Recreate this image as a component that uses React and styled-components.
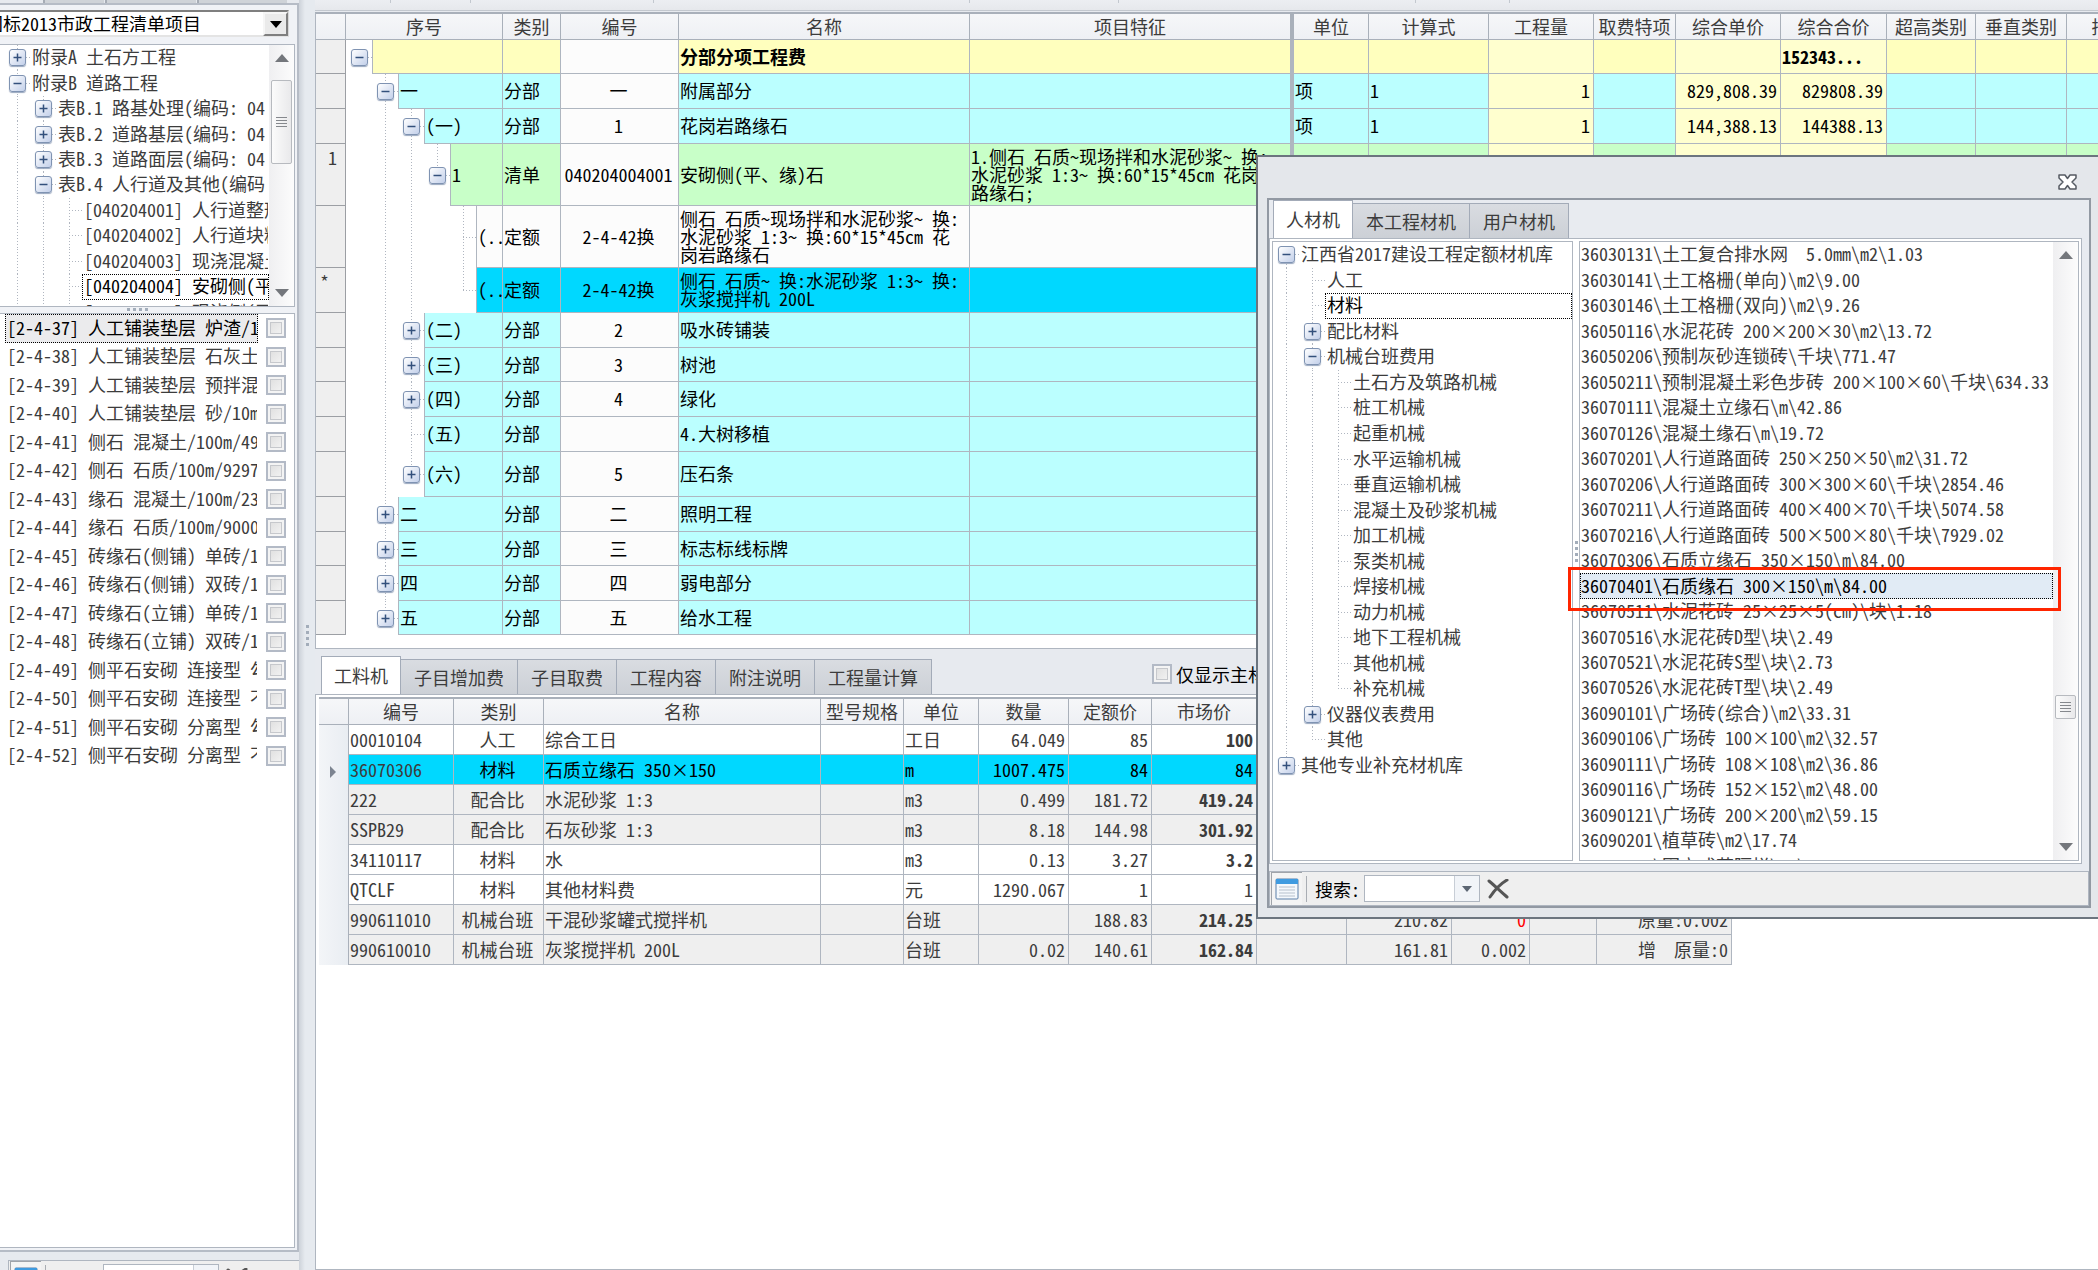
import { useState, Fragment } from 'react'
import styled, { createGlobalStyle, css } from 'styled-components'

const GlobalStyle = createGlobalStyle`
    * {
        box-sizing: border-box;
    }

    body {
        margin: 0;
        overflow: hidden;
        background: #e7eaef;
        color: #3c3c3c;
        font-family: 'Noto Sans Mono CJK SC', 'Liberation Mono', 'Noto Sans CJK SC', monospace;
        font-size: 18px;
        line-height: 18px;
    }

    button, input, select {
        font: inherit;
        color: inherit;
        margin: 0;
    }
`

const line = '#afb6c0'
const yellow = '#ffffbe'
const pale = '#ffffcf'
const cyan = '#bbffff'
const green = '#c8ffc8'
const active = '#00d8ff'

/* ---------- data ---------- */

// guides: one char per tree column, the last one belongs to the node itself
// '|' full line, 'L' upper half, 'T' lower half, ' ' nothing
const listTree = [
    { guides: '|', toggle: '+', label: '附录A 土石方工程' },
    { guides: '|', toggle: '-', label: '附录B 道路工程' },
    { guides: '||', toggle: '+', label: '表B.1 路基处理(编码: 04' },
    { guides: '||', toggle: '+', label: '表B.2 道路基层(编码: 04' },
    { guides: '||', toggle: '+', label: '表B.3 道路面层(编码: 04' },
    { guides: '||', toggle: '-', label: '表B.4 人行道及其他(编码' },
    { guides: '|||', label: '[040204001] 人行道整形' },
    { guides: '|||', label: '[040204002] 人行道块料' },
    { guides: '|||', label: '[040204003] 现浇混凝土' },
    { guides: '|||', label: '[040204004] 安砌侧(平', selected: true },
    { guides: '|||', label: '[040204005] 现浇侧(平' },
]

const quotas = [
    '[2-4-37] 人工铺装垫层 炉渣/10',
    '[2-4-38] 人工铺装垫层 石灰土',
    '[2-4-39] 人工铺装垫层 预拌混',
    '[2-4-40] 人工铺装垫层 砂/10m',
    '[2-4-41] 侧石 混凝土/100m/49',
    '[2-4-42] 侧石 石质/100m/9297',
    '[2-4-43] 缘石 混凝土/100m/23',
    '[2-4-44] 缘石 石质/100m/9000',
    '[2-4-45] 砖缘石(侧铺) 单砖/1',
    '[2-4-46] 砖缘石(侧铺) 双砖/1',
    '[2-4-47] 砖缘石(立铺) 单砖/1',
    '[2-4-48] 砖缘石(立铺) 双砖/1',
    '[2-4-49] 侧平石安砌 连接型 勾',
    '[2-4-50] 侧平石安砌 连接型 不',
    '[2-4-51] 侧平石安砌 分离型 勾',
    '[2-4-52] 侧平石安砌 分离型 不',
]

const billColumns = [
    ['序号', 157], ['类别', 58], ['编号', 118], ['名称', 291], ['项目特征', 324], ['单位', 75],
    ['计算式', 120], ['工程量', 105], ['取费特项', 82], ['综合单价', 105], ['综合合价', 106],
    ['超高类别', 89], ['垂直类别', 91], ['措施类别', 122],
]

const bill = [
    { h: 34, tone: yellow, guides: ' ', toggle: '-', name: '分部分项工程费', total: '152343...', bold: true },
    { h: 35, tone: cyan, guides: ' |', toggle: '-', no: '一', kind: '分部', code: '一', name: '附属部分', unit: '项', expr: '1', qty: '1', price: '829,808.39', total: '829808.39' },
    { h: 35, tone: cyan, guides: ' ||', toggle: '-', no: '(一)', kind: '分部', code: '1', name: '花岗岩路缘石', unit: '项', expr: '1', qty: '1', price: '144,388.13', total: '144388.13' },
    { h: 62, mark: '1', tone: green, guides: ' ||L', toggle: '-', no: '1', kind: '清单', code: '040204004001', name: '安砌侧(平、缘)石', feature: '1.侧石 石质~现场拌和水泥砂浆~ 换:\n水泥砂浆 1:3~ 换:60*15*45cm 花岗岩\n路缘石;' },
    { h: 62, tone: '#fcfcfc', guides: ' || |', no: '(..', kind: '定额', code: '2-4-42换', name: '侧石 石质~现场拌和水泥砂浆~ 换:\n水泥砂浆 1:3~ 换:60*15*45cm 花\n岗岩路缘石' },
    { h: 45, mark: '*', tone: active, selected: true, guides: ' || L', no: '(..', kind: '定额', code: '2-4-42换', name: '侧石 石质~ 换:水泥砂浆 1:3~ 换:\n灰浆搅拌机 200L' },
    { h: 35, tone: cyan, guides: ' ||', toggle: '+', no: '(二)', kind: '分部', code: '2', name: '吸水砖铺装' },
    { h: 34, tone: cyan, guides: ' ||', toggle: '+', no: '(三)', kind: '分部', code: '3', name: '树池' },
    { h: 35, tone: cyan, guides: ' ||', toggle: '+', no: '(四)', kind: '分部', code: '4', name: '绿化' },
    { h: 35, tone: cyan, guides: ' ||', no: '(五)', kind: '分部', code: '', name: '4.大树移植' },
    { h: 45, tone: cyan, guides: ' |L', toggle: '+', no: '(六)', kind: '分部', code: '5', name: '压石条' },
    { h: 35, tone: cyan, guides: ' |', toggle: '+', no: '二', kind: '分部', code: '二', name: '照明工程' },
    { h: 34, tone: cyan, guides: ' |', toggle: '+', no: '三', kind: '分部', code: '三', name: '标志标线标牌' },
    { h: 35, tone: cyan, guides: ' |', toggle: '+', no: '四', kind: '分部', code: '四', name: '弱电部分' },
    { h: 34, tone: cyan, guides: ' L', toggle: '+', no: '五', kind: '分部', code: '五', name: '给水工程' },
]

const resourceTabs = ['工料机', '子目增加费', '子目取费', '工程内容', '附注说明', '工程量计算']

const resourceColumns = [
    ['编号', 105], ['类别', 90], ['名称', 277], ['型号规格', 83], ['单位', 75], ['数量', 90],
    ['定额价', 83], ['市场价', 105], ['', 90], ['', 105], ['', 78], ['', 67], ['', 135],
]

const resources = [
    { cells: ['00010104', '人工', '综合工日', '', '工日', '64.049', '85', '100'] },
    { cells: ['36070306', '材料', '石质立缘石 350×150', '', 'm', '1007.475', '84', '84'], selected: true },
    { cells: ['222', '配合比', '水泥砂浆 1:3', '', 'm3', '0.499', '181.72', '419.24'], shade: true },
    { cells: ['SSPB29', '配合比', '石灰砂浆 1:3', '', 'm3', '8.18', '144.98', '301.92'], shade: true },
    { cells: ['34110117', '材料', '水', '', 'm3', '0.13', '3.27', '3.2'] },
    { cells: ['QTCLF', '材料', '其他材料费', '', '元', '1290.067', '1', '1'] },
    { cells: ['990611010', '机械台班', '干混砂浆罐式搅拌机', '', '台班', '', '188.83', '214.25', '', '210.82', '0', '', '原量:0.002'], shade: true, alert: true },
    { cells: ['990610010', '机械台班', '灰浆搅拌机 200L', '', '台班', '0.02', '140.61', '162.84', '', '161.81', '0.002', '', '增  原量:0'], shade: true },
]

const libraryTabs = ['人材机', '本工程材机', '用户材机']

const libraryTree = [
    { guides: 'T', toggle: '-', label: '江西省2017建设工程定额材机库' },
    { guides: '||', label: '人工' },
    { guides: '||', label: '材料', selected: true },
    { guides: '||', toggle: '+', label: '配比材料' },
    { guides: '||', toggle: '-', label: '机械台班费用' },
    ...['土石方及筑路机械', '桩工机械', '起重机械', '水平运输机械', '垂直运输机械', '混凝土及砂浆机械',
        '加工机械', '泵类机械', '焊接机械', '动力机械', '地下工程机械', '其他机械'].map(label => ({ guides: '|||', label })),
    { guides: '||L', label: '补充机械' },
    { guides: '||', toggle: '+', label: '仪器仪表费用' },
    { guides: '|L', label: '其他' },
    { guides: 'L', toggle: '+', label: '其他专业补充材机库' },
]

const materials = [
    '36030131\\土工复合排水网  5.0mm\\m2\\1.03',
    '36030141\\土工格栅(单向)\\m2\\9.00',
    '36030146\\土工格栅(双向)\\m2\\9.26',
    '36050116\\水泥花砖 200×200×30\\m2\\13.72',
    '36050206\\预制灰砂连锁砖\\千块\\771.47',
    '36050211\\预制混凝土彩色步砖 200×100×60\\千块\\634.33',
    '36070111\\混凝土立缘石\\m\\42.86',
    '36070126\\混凝土缘石\\m\\19.72',
    '36070201\\人行道路面砖 250×250×50\\m2\\31.72',
    '36070206\\人行道路面砖 300×300×60\\千块\\2854.46',
    '36070211\\人行道路面砖 400×400×70\\千块\\5074.58',
    '36070216\\人行道路面砖 500×500×80\\千块\\7929.02',
    '36070306\\石质立缘石 350×150\\m\\84.00',
    '36070401\\石质缘石 300×150\\m\\84.00',
    '36070511\\水泥花砖 25×25×5(cm)\\块\\1.18',
    '36070516\\水泥花砖D型\\块\\2.49',
    '36070521\\水泥花砖S型\\块\\2.73',
    '36070526\\水泥花砖T型\\块\\2.49',
    '36090101\\广场砖(综合)\\m2\\33.31',
    '36090106\\广场砖 100×100\\m2\\32.57',
    '36090111\\广场砖 108×108\\m2\\36.86',
    '36090116\\广场砖 152×152\\m2\\48.00',
    '36090121\\广场砖 200×200\\m2\\59.15',
    '36090201\\植草砖\\m2\\17.74',
    '36090301\\围立式花隔栏\\m2\\20.00',
]

/* ---------- shared parts ---------- */

const ToggleButton = ({ sign }) => (
    <Toggle type='button' aria-label={sign === '+' ? '展开' : '收起'}>
        <svg width='9' height='9' viewBox='0 0 9 9' stroke='#33507c' strokeWidth='1.5'>
            <path d={sign === '+' ? 'M0.500 4.500h8M4.500 0.500v8' : 'M0.500 4.500h8'} />
        </svg>
    </Toggle>
)

const Guides = ({ guides, toggle }) => (
    <>
        {guides.split('').map((kind, i) => {
            const isNode = i === guides.length - 1
            return (
                <Guide key={i} $kind={kind} $tick={isNode}>
                    {isNode && toggle && <ToggleButton sign={toggle} />}
                </Guide>
            )
        })}
    </>
)

const Tree = ({ items, height }) => (
    <TreeList style={{ height }}>
        {items.map(({ guides, toggle, label, selected }) => (
            <TreeRow key={label + guides}>
                <Guides guides={guides} toggle={toggle} />
                <TreeLabel $selected={selected}>{label}</TreeLabel>
            </TreeRow>
        ))}
    </TreeList>
)

const Scroll = ({ before, size, after }) => (
    <ScrollBar>
        <Arrow />
        <Space $grow={before} />
        <Thumb $size={size}><i /><i /><i /><i /></Thumb>
        <Space $grow={after} />
        <Arrow $down />
    </ScrollBar>
)

const SearchTools = ({ id }) => (
    <Tools>
        <ToolButton type='button' aria-label='列表'>
            <svg width='24' height='22' viewBox='0 0 24 22'>
                <rect x='1' y='1' width='22' height='20' rx='1' fill='#f4f8fc' stroke='#5b7fa8' />
                <rect x='1' y='1' width='22' height='5' fill='#3f9be0' />
                <path d='M4 9h16M4 12h16M4 15h16M4 18h16' stroke='#b6c0cc' />
            </svg>
        </ToolButton>
        <ToolLine />
        <label htmlFor={id}>搜索:</label>
        <SearchBox>
            <input id={id} type='text' />
            <button type='button' aria-label='历史'>
                <svg width='10' height='6' viewBox='0 0 10 6'><path d='M0 0h10L5 6z' fill='#5c6673' /></svg>
            </button>
        </SearchBox>
        <ClearButton type='button' aria-label='清除'>
            <svg width='22' height='20' viewBox='0 0 22 20' fill='none' stroke='#555' strokeLinecap='round'>
                <path d='M2 2C7 6 14 13 20 18' strokeWidth='3' />
                <path d='M20 1C13 5 7 12 3 18' strokeWidth='3' />
            </svg>
        </ClearButton>
    </Tools>
)

/* ---------- panels ---------- */

const CatalogPanel = () => {

    const [picked, setPicked] = useState(0)

    return (
        <Catalog>
            <TopStub><i /><i /><i /></TopStub>
            <CatalogFrame>
                <Combo>
                    <select aria-label='清单库'>
                        <option>国标2013市政工程清单项目</option>
                    </select>
                    <ComboArrow>
                        <svg width='12' height='7' viewBox='0 0 12 7'><path d='M0 0h12L6 7z' fill='#000' /></svg>
                    </ComboArrow>
                </Combo>
                <TreeBox>
                    <Tree items={listTree} height={280} />
                    <Scroll before={18} size={84} after={127} />
                </TreeBox>
                <Grip><i /><i /><i /><i /></Grip>
                <QuotaBox>
                    <QuotaList>
                        {quotas.map((text, i) => (
                            <QuotaRow key={text} $selected={picked === i} onClick={() => setPicked(i)}>
                                <label htmlFor={`quota-${i}`}>{text}</label>
                                <Check id={`quota-${i}`} type='checkbox' />
                            </QuotaRow>
                        ))}
                    </QuotaList>
                </QuotaBox>
            </CatalogFrame>
            <CatalogTools><SearchTools id='catalog-search' /></CatalogTools>
        </Catalog>
    )
}

const BillGrid = () => (
    <BillFrame>
        <Table>
            <colgroup>
                <col style={{ width: 30 }} />
                {billColumns.map(([title, width]) => <col key={title} style={{ width }} />)}
            </colgroup>
            <thead>
                <tr>
                    <HeadCell />
                    {billColumns.map(([title]) => <HeadCell key={title} $freeze={title === '项目特征'}>{title}</HeadCell>)}
                </tr>
            </thead>
            <tbody>
                {bill.map((row, i) => {
                    const money = row.selected ? active : pale
                    return (
                        <BillRow key={i} $h={row.h}>
                            <MarkCell $right={row.mark === '1'}>{row.mark}</MarkCell>
                            <NodeCell>
                                <NodeBox>
                                    <Guides guides={row.guides} toggle={row.toggle} />
                                    <NodeText $tone={row.tone}>{row.no}</NodeText>
                                </NodeBox>
                            </NodeCell>
                            <Cell $tone={row.tone}>{row.kind}</Cell>
                            <Cell $tone={row.selected ? active : '#fcfcfc'} $align='center'>{row.code}</Cell>
                            <Cell $tone={row.tone} $bold={row.bold}>{row.name}</Cell>
                            <Cell $tone={row.tone} $freeze>{row.feature}</Cell>
                            <Cell $tone={row.tone}>{row.unit}</Cell>
                            <Cell $tone={row.tone}>{row.expr}</Cell>
                            <Cell $tone={money} $align='right'>{row.qty}</Cell>
                            <Cell $tone={row.tone} />
                            <Cell $tone={money} $align='right'>{row.price}</Cell>
                            <Cell $tone={money} $align={row.bold ? 'left' : 'right'} $bold={row.bold}>{row.total}</Cell>
                            <Cell $tone={row.tone} />
                            <Cell $tone={row.tone} />
                            <Cell $tone={row.tone} />
                        </BillRow>
                    )
                })}
            </tbody>
        </Table>
    </BillFrame>
)

const ResourcePanel = () => {

    const [tab, setTab] = useState(resourceTabs[0])

    return (
        <Resource>
            <ResourceHead>
                <Tabs>
                    {resourceTabs.map(name => (
                        <Tab key={name} type='button' $on={tab === name} onClick={() => setTab(name)}>{name}</Tab>
                    ))}
                </Tabs>
                <OnlyMain>
                    <Check type='checkbox' />
                    仅显示主材
                </OnlyMain>
            </ResourceHead>
            <ResourceBody>
                <Table $top>
                    <colgroup>
                        <col style={{ width: 30 }} />
                        {resourceColumns.map(([, width], i) => <col key={i} style={{ width }} />)}
                    </colgroup>
                    <thead>
                        <tr>
                            <HeadCell />
                            {resourceColumns.map(([title], i) => <HeadCell key={i}>{title}</HeadCell>)}
                        </tr>
                    </thead>
                    <tbody>
                        {resources.map(({ cells, selected, shade, alert }) => (
                            <BillRow key={cells[0]} $h={30}>
                                <PointerCell>
                                    {selected && <svg width='6' height='12' viewBox='0 0 6 12'><path d='M0 0l6 6-6 6z' fill='#7c8490' /></svg>}
                                </PointerCell>
                                {resourceColumns.map((_, i) => (
                                    <Cell
                                        key={i}
                                        $tone={selected ? active : shade ? '#efefef' : '#fff'}
                                        $ink={alert && i === 10 ? '#f00' : selected && i > 0 ? '#000' : '#3c3c3c'}
                                        $align={i === 1 ? 'center' : i > 4 ? 'right' : 'left'}
                                        $bold={i === 7 && cells[6] !== cells[7]}
                                    >
                                        {cells[i]}
                                    </Cell>
                                ))}
                            </BillRow>
                        ))}
                    </tbody>
                </Table>
            </ResourceBody>
        </Resource>
    )
}

const LibraryDialog = () => {

    const [tab, setTab] = useState(libraryTabs[0])
    const [picked, setPicked] = useState(13)

    return (
        <Dialog role='dialog' aria-label='材机库'>
            <DialogTitle>
                <button type='button' aria-label='关闭'>
                    <svg width='19' height='16' viewBox='0 0 19 16' fill='#fff' stroke='#555b63' strokeWidth='1.5' strokeLinejoin='round'>
                        <path d='M1 1h6l2.500 3.500L12 1h6v3l-4 4 4 4v3h-6l-2.500-3.500L7 15H1v-3l4-4-4-4z' />
                    </svg>
                </button>
            </DialogTitle>
            <DialogBody>
                <Tabs $inset>
                    {libraryTabs.map(name => (
                        <Tab key={name} type='button' $on={tab === name} onClick={() => setTab(name)}>{name}</Tab>
                    ))}
                </Tabs>
                <LibraryPage>
                    <LibraryTreeBox><Tree items={libraryTree} height={536} /></LibraryTreeBox>
                    <SideGrip><i /><i /><i /><i /></SideGrip>
                    <MaterialBox>
                        <MaterialList>
                            {materials.map((text, i) => (
                                <Material key={text} $selected={picked === i} onClick={() => setPicked(i)}>{text}</Material>
                            ))}
                        </MaterialList>
                        <Scroll before={424} size={24} after={120} />
                    </MaterialBox>
                    <Highlight />
                </LibraryPage>
                <DialogTools><SearchTools id='library-search' /></DialogTools>
            </DialogBody>
        </Dialog>
    )
}

export default function App() {
    return (
        <Fragment>
            <GlobalStyle />
            <Page>
                <CatalogPanel />
                <SideGrip $page><i /><i /><i /><i /></SideGrip>
                <Main>
                    <Ribbon>{[76, 80, 183, 316, 149, 297, 94].map((w, i) => <i key={i} style={{ width: w }} />)}</Ribbon>
                    <BillGrid />
                    <ResourcePanel />
                </Main>
                <LibraryDialog />
            </Page>
        </Fragment>
    )
}

/* ---------- styles ---------- */

const Page = styled.div`
    position: relative;
    display: flex;
    height: 100vh;
    overflow: hidden;
`

const Main = styled.main`
    flex: 1;
    min-width: 0;
    display: flex;
    flex-direction: column;
`

const Ribbon = styled.div`
    display: flex;
    height: 11px;
    padding-bottom: 7px;
    border-bottom: 1px solid #c3c8cf;
    background: linear-gradient(#eceef2, #e6e8ec);

    i {
        border-right: 1px solid #c3c8cf;
    }
`

/* tree */

const dots = 'repeating-linear-gradient(to bottom, #b0b6c0 0 1px, transparent 1px 3px)'
const dotsAcross = 'repeating-linear-gradient(to right, #b0b6c0 0 1px, transparent 1px 3px)'

const lineSize = {
    '|': '1px 100%',
    'L': '1px 50%',
    'T': '1px 50%',
    ' ': '0 0',
}

const Guide = styled.span`
    flex: 0 0 26px;
    align-self: stretch;
    display: flex;
    align-items: center;
    justify-content: center;
    background-image: ${dots}, ${({ $tick }) => $tick ? dotsAcross : 'none'};
    background-repeat: no-repeat;
    background-position: 13px ${({ $kind }) => $kind === 'T' ? '100%' : '0'}, 13px 50%;
    background-size: ${({ $kind }) => lineSize[$kind]}, 13px 1px;
`

const Toggle = styled.button`
    display: flex;
    align-items: center;
    justify-content: center;
    width: 17px;
    height: 17px;
    padding: 0;
    border: 1px solid #7f93b2;
    border-radius: 3px;
    background: linear-gradient(135deg, #fff, #c3d0ea);
    box-shadow: 0 1px 1px #9aa8bf;
`

const TreeList = styled.div`
    flex: 1;
    min-width: 0;
    display: flex;
    flex-direction: column;
`

const TreeRow = styled.div`
    flex: 1;
    display: flex;
    align-items: center;
    min-height: 0;
`

const TreeLabel = styled.span`
    flex: 1;
    align-self: stretch;
    display: flex;
    align-items: center;
    min-width: 0;
    padding: 0 0 3px 1px;
    overflow: hidden;
    white-space: pre;
    border: 1px dotted ${({ $selected }) => $selected ? '#000' : 'transparent'};
    color: ${({ $selected }) => $selected ? '#000' : 'inherit'};
`

const ScrollBar = styled.div`
    flex: 0 0 25px;
    display: flex;
    flex-direction: column;
    align-items: center;
    padding: 9px 2px;
    background: linear-gradient(to right, #efeff1, #fcfcfc);
`

const Space = styled.span`
    flex: ${({ $grow }) => $grow} 1 0;
`

const Arrow = styled.span`
    width: 0;
    height: 8px;
    border: solid transparent;
    border-width: ${({ $down }) => $down ? '8px 7px 0' : '0 7px 8px'};
    border-${({ $down }) => $down ? 'top' : 'bottom'}-color: #74777c;
`

const Thumb = styled.span`
    flex: 0 0 ${({ $size }) => $size}px;
    align-self: stretch;
    display: flex;
    flex-direction: column;
    align-items: center;
    justify-content: center;
    gap: 2px;
    border: 1px solid #b7babf;
    border-radius: 2px;
    background: linear-gradient(to right, #fbfbfb, #e9e9eb);

    i {
        width: 11px;
        height: 1px;
        background: #85888d;
    }
`

/* catalog */

const Catalog = styled.aside`
    flex: 0 0 299px;
    display: flex;
    flex-direction: column;
    overflow: hidden;
`

const TopStub = styled.div`
    display: flex;
    gap: 1px;
    height: 3px;
    padding: 0 12px 0 43px;

    i {
        flex: 3;
        background: #cfd3d8;
        border-left: 2px solid #a6acb5;
    }

    i:first-child {
        flex: 2;
    }
`

const CatalogFrame = styled.div`
    flex: 1;
    min-height: 0;
    display: flex;
    flex-direction: column;
    padding: 5px 2px 2px 0;
    border: 2px solid #b6bcc6;
    border-left: 0;
    background: #f0f2f6;
`

const Combo = styled.div`
    position: relative;
    display: flex;
    height: 27px;
    margin: 0 6px 7px -18px;

    select {
        flex: 1;
        appearance: none;
        padding: 0 1px 1px;
        border: 2px solid #7f7f7f;
        border-right-color: #d8d8d8;
        border-bottom-color: #e4e4e4;
        border-radius: 0;
        background: #fff;
        color: #000;
    }
`

const ComboArrow = styled.span`
    position: absolute;
    top: 2px;
    right: 1px;
    display: flex;
    align-items: center;
    justify-content: center;
    width: 25px;
    height: 24px;
    border: 2px solid #f6f6f6;
    border-right-color: #7f7f7f;
    border-bottom-color: #7f7f7f;
    background: #eaeaea;
    pointer-events: none;
`

const TreeBox = styled.div`
    flex: 0 0 263px;
    display: flex;
    align-items: stretch;
    overflow: hidden;
    padding-left: 4px;
    border: 1px solid ${line};
    border-left: 0;
    background: #fff;
`

const Grip = styled.div`
    display: flex;
    gap: 3px;
    height: 6px;
    padding: 1px 0 2px 127px;

    i {
        width: 3px;
        background: #a3adba;
    }
`

const SideGrip = styled.div`
    flex: 0 0 ${({ $page }) => $page ? '16px' : '6px'};
    display: flex;
    flex-direction: column;
    align-items: center;
    justify-content: center;
    gap: 3px;
    background: ${({ $page }) => $page ? 'linear-gradient(to right, #cdd2d9, #e6eaef 6px, #e6eaef)' : '#fff'};

    i {
        width: 3px;
        height: 3px;
        background: #a3adba;
    }
`

const QuotaBox = styled.div`
    flex: 1;
    min-height: 0;
    border: 1px solid ${line};
    border-left: 0;
    background: #fff;
`

const QuotaList = styled.div`
    display: flex;
    flex-direction: column;
    height: 456px;
`

const QuotaRow = styled.div`
    flex: 1;
    display: flex;
    align-items: center;
    gap: 8px;
    padding: 0 8px 0 5px;

    label {
        flex: 1;
        align-self: stretch;
        display: flex;
        align-items: center;
        min-width: 0;
        padding: 0 0 3px 1px;
        overflow: hidden;
        white-space: pre;
        border: 1px dotted ${({ $selected }) => $selected ? '#000' : 'transparent'};
        background: ${({ $selected }) => $selected ? '#ebebed' : 'transparent'};
        color: ${({ $selected }) => $selected ? '#000' : 'inherit'};
    }
`

const Check = styled.input`
    appearance: none;
    flex: 0 0 20px;
    height: 20px;
    border: 2px solid #b3bac6;
    background: linear-gradient(135deg, #dcdcdc, #f6f6f6);
    box-shadow: inset 0 0 0 2px #f4f4f4, inset 0 0 0 3px #c6c8cc;
`

const CatalogTools = styled.div`
    flex: 0 0 18px;
    margin: 0 -6px 0 8px;
    padding-top: 8px;
    overflow: hidden;
`

/* tables */

const Table = styled.table`
    table-layout: fixed;
    width: 0;
    border-spacing: 0;
    white-space: pre;
    ${({ $top }) => $top && css`border-top: 2px solid #a9b0ba;`}
`

const HeadCell = styled.th`
    height: 26px;
    padding: 0 0 2px;
    overflow: hidden;
    border-right: ${({ $freeze }) => $freeze ? '4px' : '1px'} solid #a9b0ba;
    border-bottom: 1px solid #a9b0ba;
    background: linear-gradient(#f6f7f9, #eef0f4);
    font-weight: 400;
`

const BillRow = styled.tr`
    td {
        height: ${({ $h }) => $h}px;
    }
`

const Cell = styled.td`
    padding: 0 3px 2px 1px;
    overflow: hidden;
    border-right: ${({ $freeze }) => $freeze ? '4px' : '1px'} solid ${line};
    border-bottom: 1px solid ${line};
    background: ${({ $tone }) => $tone};
    color: ${({ $ink }) => $ink || '#000'};
    font-weight: ${({ $bold }) => $bold ? 700 : 400};
    text-align: ${({ $align }) => $align || 'left'};
`

const MarkCell = styled.td`
    padding: 4px 8px 0 4px;
    border-right: 1px solid #9c9fa4;
    border-bottom: 1px solid #9c9fa4;
    background: #efefef;
    text-align: ${({ $right }) => $right ? 'right' : 'left'};
    vertical-align: top;
`

const PointerCell = styled.td`
    padding: 0 12px 0 0;
    border-right: 1px solid #a9b0ba;
    background: linear-gradient(to right, #f3f5f8, #e9edf2);
    text-align: right;
`

const NodeCell = styled.td`
    padding: 0;
    border-right: 1px solid ${line};
    background: #fff;
`

const NodeBox = styled.div`
    display: flex;
    align-items: stretch;
    height: 100%;
`

const NodeText = styled.span`
    flex: 1;
    display: flex;
    align-items: center;
    min-width: 0;
    padding: 0 0 2px 1px;
    overflow: hidden;
    border-left: 1px solid ${line};
    border-bottom: 1px solid ${line};
    background: ${({ $tone }) => $tone};
    color: #000;
`

const BillFrame = styled.section`
    height: 637px;
    margin-top: 1px;
    overflow: hidden;
    border: 1px solid ${line};
    border-top: 2px solid #a9b0ba;
    border-right: 0;
    background: #fff;
`

/* tabs */

const Tabs = styled.div`
    display: flex;
    align-items: flex-end;
    padding-left: ${({ $inset }) => $inset ? '4px' : '6px'};
`

const Tab = styled.button`
    height: 35px;
    padding: 0 13px 1px;
    border: 1px solid #a3abb8;
    border-left-width: 0;
    border-bottom: 0;
    background: linear-gradient(#d9dce1, #ccd0d6);
    white-space: nowrap;

    ${({ $on }) => $on && css`
        height: 38px;
        padding: 0 12px 1px;
        border-left-width: 1px;
        background: #fff;
    `}
`

const Resource = styled.section`
    flex: 1;
    min-height: 0;
    display: flex;
    flex-direction: column;
    padding-top: 7px;
`

const ResourceHead = styled.div`
    display: flex;
    align-items: flex-end;
    gap: 220px;
`

const OnlyMain = styled.label`
    display: flex;
    align-items: center;
    align-self: center;
    gap: 4px;
    padding-bottom: 2px;
    color: #000;
    white-space: nowrap;
`

const ResourceBody = styled.div`
    flex: 1;
    min-height: 0;
    padding: 2px 0 0 3px;
    border: 1px solid ${line};
    border-right: 0;
    background: #fff;
    overflow: hidden;
`

/* dialog */

const Dialog = styled.div`
    position: absolute;
    top: 155px;
    right: 0;
    display: flex;
    flex-direction: column;
    width: 842px;
    padding: 0 7px 9px 9px;
    border: 2px solid #6c757f;
    border-right: 0;
    background: #e4e7eb;
`

const DialogTitle = styled.header`
    display: flex;
    align-items: center;
    justify-content: flex-end;
    height: 41px;
    padding: 8px 14px 0 0;

    button {
        display: flex;
        padding: 0;
        border: 0;
        background: none;
    }
`

const DialogBody = styled.div`
    display: flex;
    flex-direction: column;
    border: 2px solid #9299a3;
    background: #e8ebf0;
`

const LibraryPage = styled.div`
    position: relative;
    display: flex;
    height: 626px;
    margin-right: 7px;
    padding: 2px;
    border: 1px solid ${line};
    background: #fff;
`

const LibraryTreeBox = styled.div`
    flex: 0 0 301px;
    display: flex;
    align-items: flex-start;
    border: 1px solid ${line};
`

const MaterialBox = styled.div`
    flex: 1;
    min-width: 0;
    display: flex;
    overflow: hidden;
    border: 1px solid ${line};
`

const MaterialList = styled.div`
    flex: 1;
    min-width: 0;
    display: flex;
    flex-direction: column;
    height: 637px;
`

const Material = styled.div`
    flex: 1;
    display: flex;
    align-items: center;
    padding: 0 0 3px 0;
    overflow: hidden;
    white-space: pre;
    border: 1px dotted ${({ $selected }) => $selected ? '#000' : 'transparent'};
    background: ${({ $selected }) => $selected ? '#e1ebf5' : 'transparent'};
    color: ${({ $selected }) => $selected ? '#000' : 'inherit'};
`

const Highlight = styled.div`
    position: absolute;
    top: 328px;
    right: 20px;
    width: 493px;
    height: 44px;
    border: 3px solid #ff2500;
    pointer-events: none;
`

const Tools = styled.div`
    display: flex;
    align-items: center;
    gap: 4px;
    height: 35px;
    padding: 0 4px 0 1px;
    border: 1px solid ${line};
    background: #efefef;

    label {
        color: #000;
        padding-left: 4px;
    }
`

const DialogTools = styled.div`
    margin-top: 7px;
`

const ToolButton = styled.button`
    display: flex;
    align-items: center;
    justify-content: center;
    width: 31px;
    height: 33px;
    padding: 0;
    border: solid #a0a4aa;
    border-width: 1px 0 0 1px;
    background: #f4f4f4;
`

const ToolLine = styled.span`
    width: 1px;
    height: 26px;
    background: #a9adb3;
`

const SearchBox = styled.div`
    display: flex;
    width: 116px;
    height: 27px;
    border: 1px solid ${line};

    input {
        flex: 1;
        min-width: 0;
        padding: 0 3px;
        border: 0;
        background: #fff;
    }

    button {
        display: flex;
        align-items: center;
        justify-content: center;
        width: 25px;
        padding: 0;
        border: 0;
        border-left: 1px solid #c8ced6;
        background: #f1f4f8;
    }
`

const ClearButton = styled.button`
    display: flex;
    padding: 0 3px;
    border: 0;
    background: none;
`
